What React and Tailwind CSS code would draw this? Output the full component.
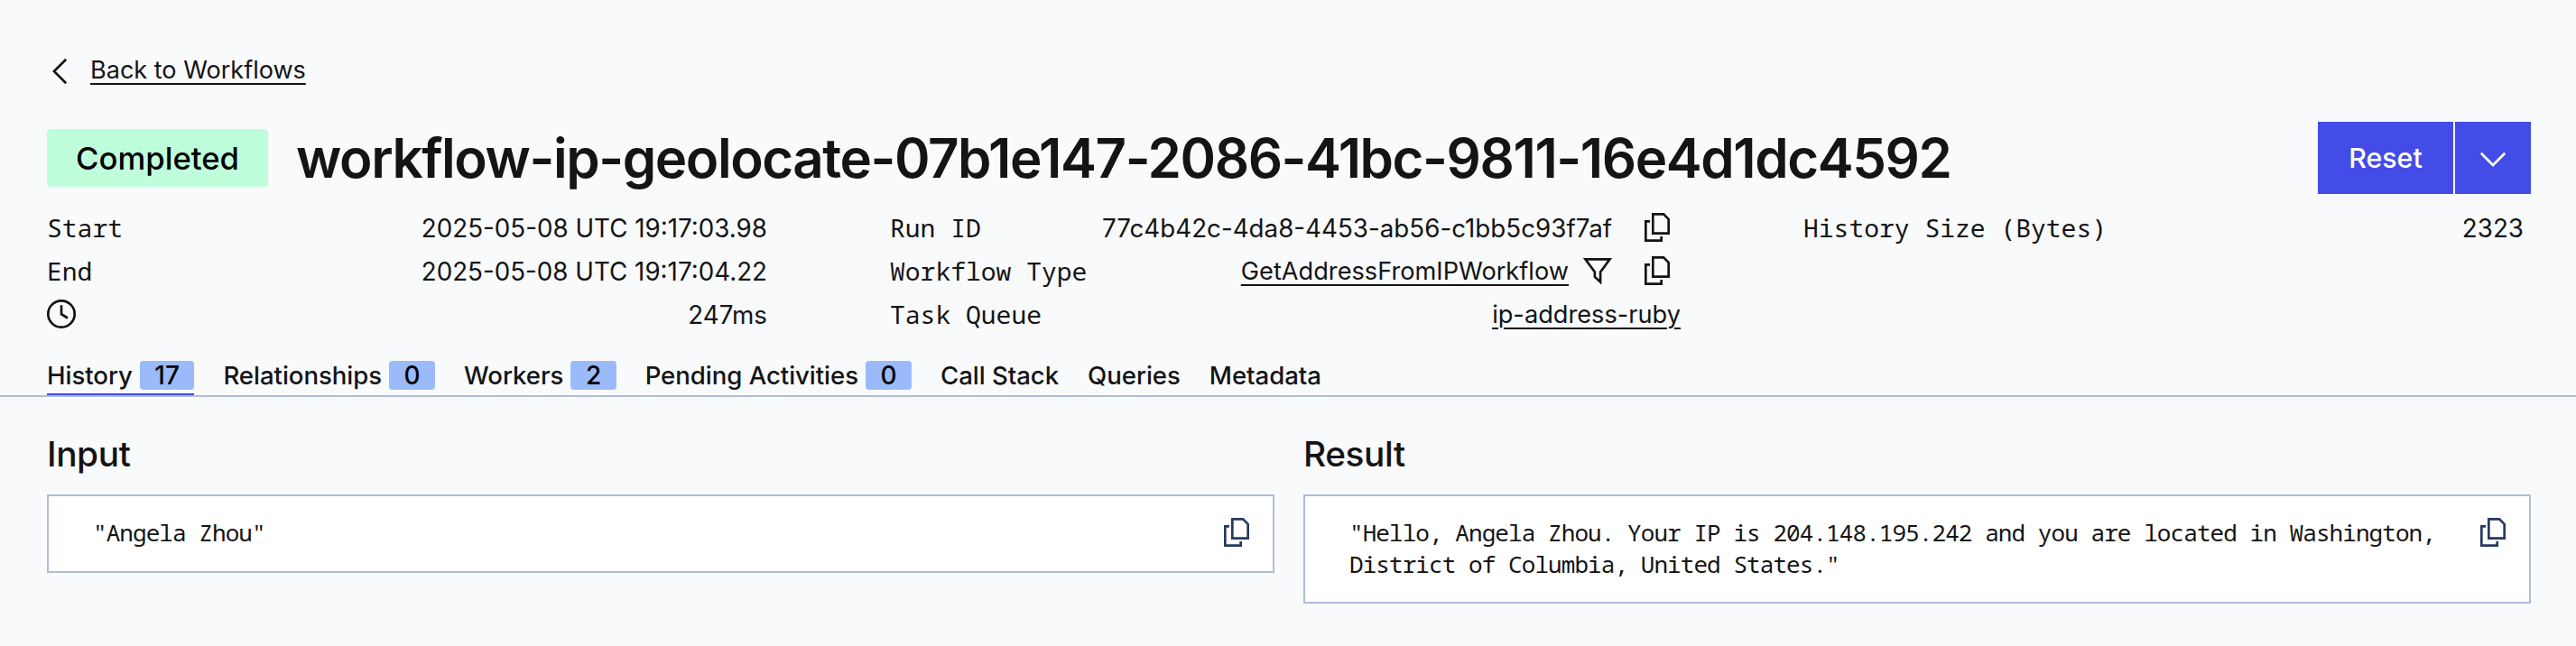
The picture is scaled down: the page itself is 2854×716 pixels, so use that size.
function CopyIcon() {
  return (
    <svg viewBox="0 0 28 32" className="h-8 w-7 shrink-0" fill="none" stroke="currentColor" strokeWidth="2.67">
      <path d="M9.33 1.33h11.8l5.53 5.6v15.74H9.33z" />
      <path d="M6 9.33H1.33v21.34h17.34V26" />
    </svg>
  );
}

function FilterIcon() {
  return (
    <svg viewBox="0 0 32 32" className="h-8 w-8 shrink-0" fill="none" stroke="currentColor" strokeWidth="2.67">
      <path d="M2.4 3.33h27.2L19.1 17.4v11.2L12.9 23v-5.6z" />
    </svg>
  );
}

function ClockIcon() {
  return (
    <svg viewBox="0 0 32 32" className="h-8 w-8 shrink-0" fill="none" stroke="currentColor" strokeWidth="2.67">
      <circle cx="16" cy="16" r="14.67" />
      <path d="M16 6.3v9.9l6.9 4.3" />
    </svg>
  );
}

function Row({ label, children }) {
  return (
    <div className="flex h-12 items-center justify-between">
      <span className="pb-px font-['Noto_Sans_Mono',monospace] leading-10">{label}</span>
      <div className="flex items-center text-[27.75px] leading-10">{children}</div>
    </div>
  );
}

function Value({ children }) {
  return <span className="pt-[2px]">{children}</span>;
}

function Link({ children }) {
  return (
    <a className="pt-px text-[27.2px] underline decoration-2 underline-offset-[5px]">{children}</a>
  );
}

function Tab({ label, count, active }) {
  return (
    <div className={active ? "flex h-[38px] items-start gap-2 border-b-2 border-[#444ce7]" : "flex h-[38px] items-start gap-2"}>
      <span className="h-8 text-[27.6px] leading-8 tracking-[-0.05px]">{label}</span>
      {count !== undefined && (
        <span className="h-8 rounded-[4px] bg-[#9bbaf9] px-[16.5px] leading-8 text-black">{count}</span>
      )}
    </div>
  );
}

function Payload({ title, children }) {
  return (
    <section className="w-[1360px]">
      <h2 className="h-[69px] text-[38.8px] font-medium leading-[48px] tracking-[-0.4px]">{title}</h2>
      <div className="flex items-start justify-between border-2 border-[#aebed9] bg-white pb-[24px] pl-[49px] pr-[26px] pt-[23px]">
        <p className="whitespace-pre pb-px font-['Noto_Sans_Mono',monospace] text-[26px] leading-[34.5px] tracking-[-0.93px]">
          {children}
        </p>
        <span className="pt-px text-[#273860]">
          <CopyIcon />
        </span>
      </div>
    </section>
  );
}

export default function App() {
  return (
    <div className="h-[716px] w-[2854px] overflow-hidden bg-[#f8fafc] pt-[55px] font-['Inter',sans-serif] text-[28px] text-[#141414]">
      <nav className="flex h-12 items-center pl-[58px]">
        <svg viewBox="0 0 18 32" className="h-8 w-[18px]" fill="none" stroke="currentColor" strokeWidth="2.67">
          <path d="M15.2 2.7L1.9 16l13.3 13.3" />
        </svg>
        <a className="mb-[2px] ml-6 text-[27.05px] leading-10 underline decoration-2 underline-offset-[5px]">Back to Workflows</a>
      </nav>

      <header className="mt-[32px] flex h-20 items-center pl-[52px] pr-[50px]">
        <span className="h-16 rounded-[4px] bg-[#bffedb] px-8 text-[34.7px] font-medium leading-[64px] text-black">Completed</span>
        <h1 className="ml-[31px] text-[60px] font-[570] leading-[72px] tracking-[-1.44px]">
          workflow-ip-geolocate-07b1e147-2086-41bc-9811-16e4d1dc4592
        </h1>
        <div className="ml-auto flex h-20 gap-[2px] text-white">
          <button className="flex w-[150px] items-center justify-center bg-[#444ce7] pt-[2px] text-[30.3px] font-medium">Reset</button>
          <button className="flex w-[84px] items-center justify-center bg-[#444ce7]">
            <svg viewBox="0 0 32 32" className="h-8 w-8" fill="none" stroke="currentColor" strokeWidth="2.67">
              <path d="M2.8 10.8L16 24l13.2-13.2" />
            </svg>
          </button>
        </div>
      </header>

      <div className="mt-[13px] flex gap-[136px] pl-[52px]">
        <div className="w-[798px]">
          <Row label="Start"><Value>2025-05-08 UTC 19:17:03.98</Value></Row>
          <Row label="End"><Value>2025-05-08 UTC 19:17:04.22</Value></Row>
          <Row label={<ClockIcon />}><Value>247ms</Value></Row>
        </div>
        <div className="w-[876px]">
          <Row label="Run ID">
            <Value>77c4b42c-4da8-4453-ab56-c1bb5c93f7af</Value>
            <span className="ml-9 mr-3">
              <CopyIcon />
            </span>
          </Row>
          <Row label="Workflow Type">
            <Link>GetAddressFromIPWorkflow</Link>
            <span className="ml-4">
              <FilterIcon />
            </span>
            <span className="ml-9 mr-3">
              <CopyIcon />
            </span>
          </Row>
          <Row label="Task Queue">
            <Link>ip-address-ruby</Link>
          </Row>
        </div>
        <div className="w-[798px]">
          <Row label="History Size (Bytes)"><Value>2323</Value></Row>
        </div>
      </div>

      <div className="mt-[28px] flex gap-8 border-b-2 border-[#aebed9] pl-[52px] font-medium">
        <Tab label="History" count={17} active />
        <Tab label="Relationships" count={0} />
        <Tab label="Workers" count={2} />
        <Tab label="Pending Activities" count={0} />
        <Tab label="Call Stack" />
        <Tab label="Queries" />
        <Tab label="Metadata" />
      </div>

      <main className="mt-[39px] flex items-start gap-8 pl-[52px]">
        <Payload title="Input">"Angela Zhou"</Payload>
        <Payload title="Result">
          {'"Hello, Angela Zhou. Your IP is 204.148.195.242 and you are located in Washington,\nDistrict of Columbia, United States."'}
        </Payload>
      </main>
    </div>
  );
}
